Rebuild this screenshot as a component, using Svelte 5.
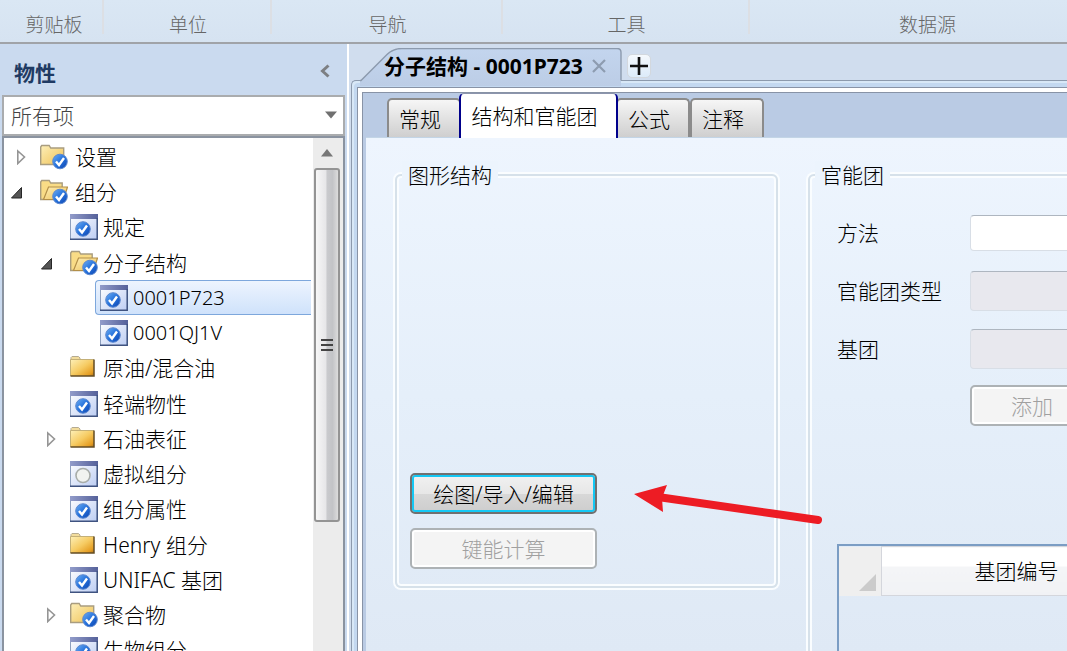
<script lang="ts">
  type Node = {
    label: string;
    level: number;
    icon: 'folder' | 'folder-check' | 'open-check' | 'form-check' | 'form-empty';
    toggle?: 'open' | 'closed';
  };

  const groups = [
    { name: '剪贴板', size: 'g1' },
    { name: '单位', size: 'g2' },
    { name: '导航', size: 'g3' },
    { name: '工具', size: 'g4' },
    { name: '数据源', size: 'g5' }
  ];

  const nodes: Node[] = [
    { label: '设置', level: 0, icon: 'folder-check', toggle: 'closed' },
    { label: '组分', level: 0, icon: 'open-check', toggle: 'open' },
    { label: '规定', level: 1, icon: 'form-check' },
    { label: '分子结构', level: 1, icon: 'open-check', toggle: 'open' },
    { label: '0001P723', level: 2, icon: 'form-check' },
    { label: '0001QJ1V', level: 2, icon: 'form-check' },
    { label: '原油/混合油', level: 1, icon: 'folder' },
    { label: '轻端物性', level: 1, icon: 'form-check' },
    { label: '石油表征', level: 1, icon: 'folder', toggle: 'closed' },
    { label: '虚拟组分', level: 1, icon: 'form-empty' },
    { label: '组分属性', level: 1, icon: 'form-check' },
    { label: 'Henry 组分', level: 1, icon: 'folder' },
    { label: 'UNIFAC 基团', level: 1, icon: 'form-check' },
    { label: '聚合物', level: 1, icon: 'folder-check', toggle: 'closed' },
    { label: '生物组分', level: 1, icon: 'form-check' }
  ];

  const tabs = ['常规', '结构和官能团', '公式', '注释'];

  let selected = $state('0001P723');
  let activeTab = $state('结构和官能团');
</script>

<svg class="defs" width="0" height="0" aria-hidden="true">
  <defs>
    <linearGradient id="gold" x1="0" y1="0" x2="1" y2="1">
      <stop offset="0" stop-color="#fdf0b8" />
      <stop offset="0.5" stop-color="#f6cb62" />
      <stop offset="0.85" stop-color="#e59d22" />
      <stop offset="1" stop-color="#a8701c" />
    </linearGradient>
    <linearGradient id="pale" x1="0" y1="0" x2="1" y2="1">
      <stop offset="0" stop-color="#fdefb8" />
      <stop offset="1" stop-color="#efc257" />
    </linearGradient>
    <linearGradient id="pane" x1="0" y1="0" x2="1" y2="1">
      <stop offset="0" stop-color="#ffffff" />
      <stop offset="1" stop-color="#bccdf3" />
    </linearGradient>
    <linearGradient id="bar" x1="0" y1="0" x2="1" y2="0">
      <stop offset="0" stop-color="#929cca" />
      <stop offset="1" stop-color="#55619a" />
    </linearGradient>
    <linearGradient id="ball" x1="0" y1="0" x2="1" y2="1">
      <stop offset="0" stop-color="#6fb0f4" />
      <stop offset="0.5" stop-color="#2672dc" />
      <stop offset="1" stop-color="#0d44b0" />
    </linearGradient>
    <linearGradient id="doctab" x1="0" y1="0" x2="0" y2="1">
      <stop offset="0" stop-color="#c3d5ee" />
      <stop offset="1" stop-color="#bccde6" />
    </linearGradient>
  </defs>
</svg>

{#snippet badge(cx: number, cy: number)}
  <circle {cx} {cy} r="7.300" fill="url(#ball)" stroke="#5c88cf" />
  <path d="M{cx - 4} {cy}l3 3.5 5-7" fill="none" stroke="#fff" stroke-width="2.400" />
{/snippet}

{#snippet nodeIcon(kind: string)}
  <svg class="icon" width="28" height="26" viewBox="0 0 28 26" aria-hidden="true">
    {#if kind === 'folder'}
      <path d="M1 5V2.500l1-1h6.500l1.500 1.500V5z" fill="#f2dc9c" stroke="#b5ab92" />
      <path d="M.5 4.500h23.500v16.500H.5z" fill="url(#gold)" />
      <path d="M.5 21V4.500h23.500" fill="none" stroke="#c4b077" />
      <path d="M24 4.500V21H.5" fill="none" stroke="#634c25" stroke-width="1.500" />
    {:else if kind === 'folder-check'}
      <path d="M.7 20.500V3l1-1.500h7.500l1.500 2.500h13v16.500z" fill="url(#pale)" stroke="#a99d80" stroke-width="1.400" />
      {@render badge(20, 17.5)}
    {:else if kind === 'open-check'}
      <path d="M.7 20.500V3l1-1.500h7.500l1.500 2.500h11.500v16.500z" fill="#f9dc86" stroke="#a99d80" stroke-width="1.400" />
      <path d="M3.500 20.500l5-12.500h19l-4 12.500z" fill="url(#pale)" stroke="#b38f48" stroke-width="1.200" />
      {@render badge(20, 17.5)}
    {:else}
      <path d="M.5.5h27v25h-27z" fill="url(#pane)" stroke="#8d9fbd" />
      <path d="M0 0h28v5H0z" fill="url(#bar)" />
      <path d="M27.200 4v21.300H0" fill="none" stroke="#3f5380" stroke-width="1.500" />
      {#if kind === 'form-check'}
        {@render badge(13, 15)}
      {:else}
        <circle cx="13" cy="14.500" r="7" fill="#f1f3f0" stroke="#a8ada9" stroke-width="1.600" />
      {/if}
    {/if}
  </svg>
{/snippet}

<div class="app">
  <header class="ribbon">
    {#each groups as group}
      <div class="group {group.size}">{group.name}</div>
    {/each}
  </header>

  <div class="body">
    <aside class="sidebar">
      <div class="side-head">
        <h2>物性</h2>
        <button class="collapse" aria-label="折叠">
          <svg width="10" height="14" viewBox="0 0 10 14"><path d="M8.500 1.500L2.500 7l6 5.500" fill="none" stroke="#7d7f83" stroke-width="3" /></svg>
        </button>
      </div>
      <div class="filter">
        <select aria-label="筛选">
          <option>所有项</option>
        </select>
        <svg class="caret" width="12" height="8" viewBox="0 0 12 8" aria-hidden="true"><path d="M0 .5h12L6 7.500z" fill="#707070" /></svg>
      </div>
      <div class="tree-box">
        <ul class="tree" role="tree">
          {#each nodes as node}
            <li class="row level-{node.level}" role="treeitem" aria-selected={selected === node.label}>
              <span class="toggle">
                {#if node.toggle === 'closed'}
                  <button aria-label="展开">
                    <svg width="22" height="16" viewBox="0 0 22 16"><path d="M7.800 2v12.500L14.500 8z" fill="#fff" stroke="#959595" stroke-width="1.600" /></svg>
                  </button>
                {:else if node.toggle === 'open'}
                  <button aria-label="收起">
                    <svg width="22" height="16" viewBox="0 0 22 16"><path d="M11.500 3.500v10.500H1.500z" fill="#555" stroke="#262626" /></svg>
                  </button>
                {/if}
              </span>
              <button class="node" class:selected={selected === node.label} onclick={() => (selected = node.label)}>
                {@render nodeIcon(node.icon)}
                <span class:code={node.level === 2}>{node.label}</span>
              </button>
            </li>
          {/each}
        </ul>
        <div class="scrollbar" aria-hidden="true">
          <svg class="up" width="12" height="8" viewBox="0 0 12 8"><path d="M0 7.500L6 0l6 7.500z" fill="#777" /></svg>
          <div class="thumb"><i></i><i></i><i></i></div>
        </div>
      </div>
    </aside>

    <main class="main">
      <div class="doc-tabs">
        <div class="doc-tab">
          <svg class="tab-shape" width="264" height="38" viewBox="0 0 264 38" aria-hidden="true">
            <path d="M0 38v-5.500h1L27 6.500Q33 .5 42 .5h215q4 0 4 4V38z" fill="url(#doctab)" />
            <path d="M0 32.500h1L27 6.500Q33 .5 42 .5h215q4 0 4 4v28" fill="none" stroke="#8c9aad" stroke-width="1.400" />
          </svg>
          <span class="doc-name">分子结构 - 0001P723</span>
          <button class="close" aria-label="关闭">
            <svg width="16" height="14" viewBox="0 0 16 14"><path d="M2 1l12 12M14 1L2 13" stroke="#8d9cb0" stroke-width="2.200" /></svg>
          </button>
        </div>
        <button class="add" aria-label="新建">
          <svg width="18" height="18" viewBox="0 0 18 18"><path d="M9 0v18M0 9h18" stroke="#111" stroke-width="2.600" /></svg>
        </button>
      </div>

      <div class="frame">
        <div class="sheet">
          <div class="tabs" role="tablist">
            {#each tabs as tab}
              <button class="tab" class:active={activeTab === tab} role="tab" aria-selected={activeTab === tab} onclick={() => (activeTab = tab)}>{tab}</button>
            {/each}
          </div>

          <div class="page">
            <fieldset class="structure">
              <legend>图形结构</legend>
              <div class="actions">
                <button class="btn primary">绘图/导入/编辑</button>
                <button class="btn" disabled>键能计算</button>
                <svg class="pointer" width="190" height="44" viewBox="0 0 190 44" aria-hidden="true">
                  <path d="M24 14L184 37" stroke="#ed1c24" stroke-width="8" stroke-linecap="round" />
                  <path d="M0 11L33 2l-5 13 1 14z" fill="#ed1c24" />
                </svg>
              </div>
            </fieldset>

            <fieldset class="functional">
              <legend>官能团</legend>
              <div class="form">
                <label for="method">方法</label>
                <select id="method" class="short"></select>
                <label for="kind">官能团类型</label>
                <select id="kind" disabled></select>
                <label for="base">基团</label>
                <select id="base" disabled></select>
                <button class="btn add-btn" disabled>添加</button>
              </div>
              <div class="grid-box">
                <table>
                  <thead>
                    <tr>
                      <td class="corner"><svg width="17" height="17" viewBox="0 0 17 17" aria-hidden="true"><path d="M17 0v17H0z" fill="#cbcbcb" /></svg></td>
                      <th>基团编号</th>
                    </tr>
                  </thead>
                </table>
              </div>
            </fieldset>
          </div>
        </div>
      </div>
    </main>
  </div>
</div>

<style>
  :global(body) {
    margin: 0;
    overflow: hidden;
  }

  .app,
  .app button,
  .app select {
    font-family: "Noto Sans", "Noto Sans CJK SC", sans-serif;
    font-size: 21px;
    font-weight: 300;
    color: #000;
  }

  .app * {
    box-sizing: border-box;
  }

  .app {
    display: flex;
    flex-direction: column;
    height: 100vh;
    overflow: hidden;
    line-height: 28px;
    white-space: nowrap;
  }

  .defs {
    position: absolute;
  }

  button {
    padding: 0;
    border: 0;
    background: none;
    line-height: 28px;
  }

  svg {
    display: block;
    flex: none;
  }

  /* ribbon */
  .ribbon {
    display: flex;
    flex: none;
    height: 44px;
    overflow: hidden;
    background: linear-gradient(#dae7f4, #d6e3f1);
    border-bottom: 2px solid #a0a3a8;
  }

  .group {
    flex: none;
    height: 34px;
    padding: 11px 0 0 2px;
    border-right: 2px solid #dcdfe4;
    font-size: 19px;
    text-align: center;
    color: #666;
  }

  .g1 { width: 104px; padding-left: 6px; }
  .g2 { width: 168px; }
  .g3 { width: 231px; }
  .g4 { width: 247px; }
  .g5 { width: 355px; }

  .body {
    display: flex;
    flex: 1;
    min-height: 0;
  }

  /* sidebar */
  .sidebar {
    display: flex;
    flex-direction: column;
    flex: none;
    width: 349px;
    padding: 0 3px 0 2px;
    background: #cadaef;
    border-right: 2px solid #fff;
  }

  .side-head {
    display: flex;
    align-items: center;
    justify-content: space-between;
    flex: none;
    height: 51px;
    padding: 6px 14px 0 12px;
  }

  h2 {
    margin: 0;
    font-size: 21px;
    font-weight: 700;
    color: #1f3a63;
  }

  .collapse {
    margin-bottom: 4px;
  }

  .filter {
    position: relative;
    flex: none;
    height: 41px;
    margin-right: -1px;
  }

  .filter select {
    appearance: none;
    width: 100%;
    height: 100%;
    padding: 0 7px;
    border: 2px solid #aaacae;
    border-radius: 0;
    background: #fff;
    color: #444;
  }

  .caret {
    position: absolute;
    right: 8px;
    top: 16px;
  }

  .tree-box {
    display: flex;
    flex: 1;
    min-height: 0;
    margin-right: -1px;
    border: 2px solid #8a93a0;
    border-bottom: 0;
    background: #fff;
    overflow: hidden;
  }

  .tree {
    display: grid;
    grid-auto-rows: 35px 35px 36px 35px;
    flex: 1;
    margin: 0;
    padding: 1px 2px 0 6px;
    list-style: none;
  }

  .row {
    display: flex;
    align-items: center;
  }

  .level-1 { padding-left: 30px; }
  .level-2 { padding-left: 60px; }

  .toggle {
    flex: none;
    width: 25px;
  }

  .toggle button {
    display: block;
  }

  .node {
    display: flex;
    align-items: center;
    flex: 1;
    gap: 5px;
    height: 35px;
    padding-left: 4px;
    border: 1px solid transparent;
    border-right: 0;
    text-align: left;
  }

  .level-0 .node {
    gap: 7px;
  }

  .selected {
    border-color: #7da7dc;
    border-radius: 4px 0 0 4px;
    background: linear-gradient(#edf4fe, #cfe2fb);
  }

  .code {
    font-size: 20px;
  }

  .scrollbar {
    display: flex;
    flex-direction: column;
    align-items: center;
    flex: none;
    width: 30px;
    padding-right: 2px;
    background: #ececec;
  }

  .up {
    margin: 11px 0;
  }

  .thumb {
    display: flex;
    flex-direction: column;
    justify-content: center;
    align-items: center;
    gap: 3px;
    flex: none;
    width: 26px;
    height: 354px;
    border: 2px solid #949494;
    border-radius: 3px;
    background: linear-gradient(90deg, #f7f7f7, #e6e6e8 45%, #c9cacd 50%, #c3c4c7 75%, #dcdcdc);
  }

  .thumb i {
    width: 12px;
    height: 2px;
    background: #444;
  }

  /* document area */
  .main {
    display: flex;
    flex-direction: column;
    flex: 1;
    min-width: 0;
    padding-left: 2px;
    background: #d0ddee;
  }

  .doc-tabs {
    display: flex;
    flex: none;
    height: 36px;
    padding: 4px 0 0 9px;
  }

  .doc-tab {
    position: relative;
    display: flex;
    align-items: center;
    gap: 8px;
    width: 261px;
    padding: 4px 0 0 24px;
  }

  .tab-shape {
    position: absolute;
    left: 0;
    top: 0;
    z-index: 1;
  }

  .doc-name,
  .close {
    position: relative;
    z-index: 2;
  }

  .doc-name {
    font-weight: 700;
  }

  .add {
    display: grid;
    place-items: center;
    width: 24px;
    height: 24px;
    margin: 6px 0 0 6px;
    border: 1px solid #d3d8de;
    border-radius: 5px;
    background: linear-gradient(#f5f9fd, #dcebf9);
  }

  .frame {
    display: flex;
    flex: 1;
    min-height: 0;
    padding: 6px 0 0 5px;
    border-top: 1px solid #8c9aad;
    border-left: 1px solid #8c9aad;
    border-top-left-radius: 5px;
    background: #c3d8f0;
    box-shadow: inset 2px 2px 0 #d8e8f7;
  }

  .sheet {
    display: flex;
    flex-direction: column;
    flex: 1;
    min-width: 0;
    border-top: 1px solid #8893a6;
    border-left: 1px solid #8893a6;
    background: #bacbe4;
    box-shadow: inset 4px 4px 0 #fff, inset 5px 5px 0 #8893a6;
    padding: 5px 0 0 8px;
  }

  .tabs {
    display: flex;
    align-items: flex-end;
    flex: none;
    height: 45px;
    padding-left: 21px;
    border-bottom: 1px solid #c3d5e6;
  }

  .tab {
    width: 74px;
    height: 39px;
    padding-right: 8px;
    border: 2px solid #8b8b8b;
    border-bottom: 0;
    border-radius: 5px 5px 0 0;
    background: linear-gradient(#f6f6f6, #e2e2e2 50%, #cfcfcf);
  }

  .tab.active {
    width: 159px;
    height: 45px;
    margin: 0 -2px -1px;
    padding-right: 8px;
    border-color: #8c95ad #00008b;
    border-width: 1px 2px 0;
    background: #fff;
    z-index: 1;
  }

  .page {
    display: flex;
    align-items: flex-start;
    gap: 30px;
    flex: 1;
    min-height: 0;
    padding: 23px 0 0 29px;
    background: linear-gradient(#eef5fe, #e5effa 50%, #dfe9f5);
    overflow: hidden;
  }

  fieldset {
    margin: 0;
    padding: 0;
    border: 2px solid #d6e1ea;
    border-radius: 6px;
    box-shadow: 0 0 0 2px #fafdff, inset 0 0 0 2px #fafdff;
  }

  legend {
    margin-left: 5px;
    padding: 0 6px;
    background: #ecf4fd;
  }

  .structure {
    flex: none;
    width: 383px;
    height: 427px;
  }

  .actions {
    position: relative;
    display: flex;
    flex-direction: column;
    gap: 14px;
    width: 187px;
    margin: 284px 0 0 13px;
  }

  .btn {
    height: 41px;
    border: 2px solid #adb2b5;
    border-radius: 5px;
    background: #f4f4f4;
    box-shadow: inset 0 0 0 2px #fff;
  }

  .btn:disabled {
    color: #a0a0a0;
  }

  .primary {
    border-color: #707070;
    background: linear-gradient(#f1f1f1, #e7e7e7 50%, #d8d8d8 50%, #cdcdcd);
    box-shadow: inset 0 0 0 2px #14c8f5;
  }

  .pointer {
    position: absolute;
    left: 224px;
    top: 10px;
  }

  .functional {
    flex: 1 0 420px;
    height: 600px;
  }

  .form {
    display: grid;
    grid-template-columns: 133px 1fr;
    grid-template-rows: 40px 40px 40px 37px;
    gap: 18px 0;
    align-items: center;
    margin: 24px 0 0 27px;
  }

  .form select {
    appearance: none;
    height: 40px;
    border: 1px solid #d8dee6;
    border-top-color: #aeb6c0;
    border-radius: 4px;
    background: #fff;
  }

  .form select.short {
    height: 36px;
  }

  .form select:disabled {
    background: #e8e8ee;
    opacity: 1;
  }

  .add-btn {
    grid-column: 2;
    justify-self: start;
    width: 124px;
  }

  .grid-box {
    height: 240px;
    margin: 120px 0 0 27px;
    border: 2px solid #7b9dc4;
    border-right: 0;
  }

  table {
    width: 100%;
    border-collapse: collapse;
  }

  td,
  th {
    height: 49px;
    padding: 0;
  }

  .corner {
    width: 42px;
    background: #efefef;
    vertical-align: bottom;
  }

  .corner svg {
    margin: 0 0 5px 20px;
  }

  th {
    padding: 0 93px;
    border: 1px solid #d4d6dc;
    background: linear-gradient(#fff 40%, #f4f5f7 40%, #f1f2f5);
    font-weight: 300;
    text-align: left;
  }
</style>
